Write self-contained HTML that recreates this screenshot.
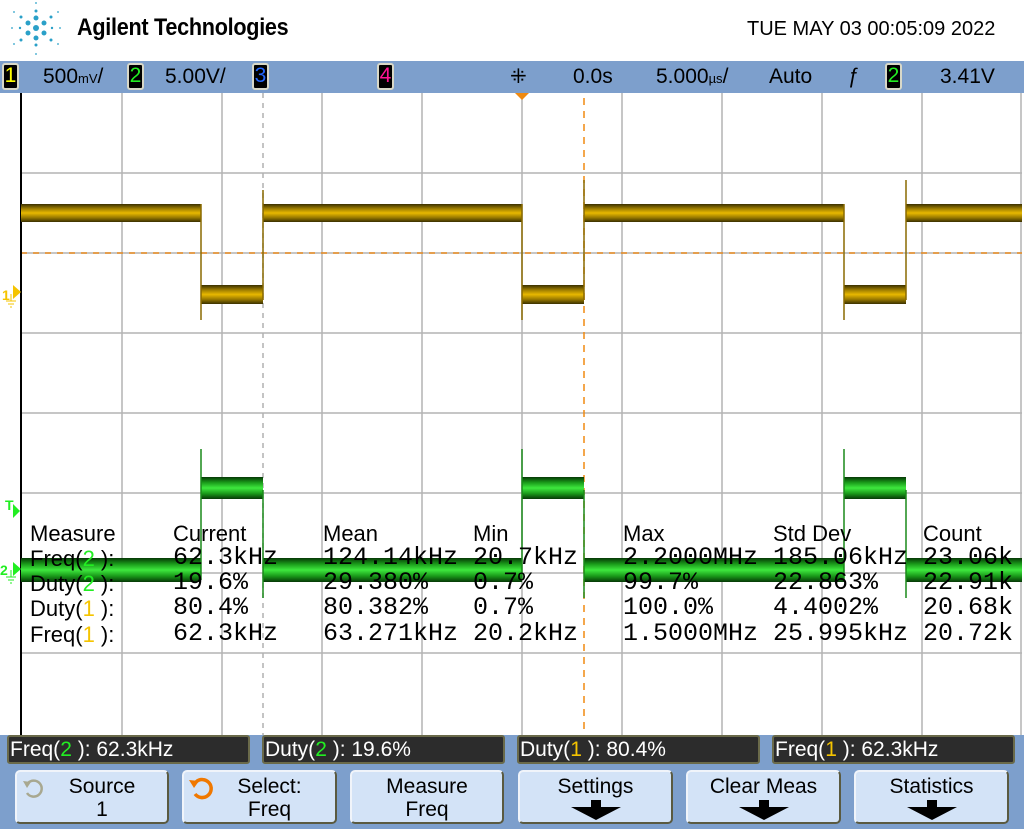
<!DOCTYPE html>
<html><head><meta charset="utf-8"><style>
*{margin:0;padding:0;box-sizing:border-box}
body{width:1024px;height:829px;overflow:hidden;background:#7d9fcc;font-family:"Liberation Sans",sans-serif;position:relative}
.hdr{position:absolute;left:0;top:0;width:1024px;height:61px;background:#fff}
.abs{position:absolute;white-space:nowrap}
.bar{position:absolute;top:61px;left:0;width:1024px;height:32px;background:#7d9fcc;font-size:21px;color:#000}
.cb{position:absolute;top:2px;width:17px;height:27px;background:#000;border:2px solid #d8d8c8;border-radius:3px;font-size:21px;line-height:22px;text-align:center}
.mbox{position:absolute;top:735px;height:29px;background:#2c2c2c;border:2px solid #6a6a4a;border-radius:3px;color:#fff;font-size:21px;line-height:25px;padding-left:1px}
.btn{position:absolute;top:770px;height:54px;background:#d3e3f7;border:2px solid #5a5a40;border-top-color:#f0f4fa;border-left-color:#f0f4fa;border-radius:5px;text-align:center;font-size:21px;line-height:23px;padding-top:3px}
.m{position:absolute;font-family:"Liberation Mono",monospace;font-size:25px;color:#000}
.h{position:absolute;font-size:22px;color:#000}
.g{color:#22ee22}.y{color:#f5c400}
.arr{display:inline-block;margin-top:2px}
</style></head><body>
<div class="hdr">
<svg class="abs" style="left:8px;top:2px" width="60" height="56" viewBox="0 0 60 56">
<g fill="#2aa0c8">
<circle cx="28" cy="26" r="3"/><circle cx="36" cy="21" r="2.5"/><circle cx="20" cy="21" r="2.5"/><circle cx="36" cy="31" r="2.5"/><circle cx="20" cy="31" r="2.5"/><circle cx="28" cy="36" r="2.5"/><circle cx="28" cy="16" r="2.5"/>
<circle cx="43" cy="15" r="1.5"/><circle cx="13" cy="15" r="1.5"/><circle cx="43" cy="38" r="1.5"/><circle cx="13" cy="38" r="1.5"/><circle cx="28" cy="9" r="1.5"/><circle cx="28" cy="43" r="1.5"/>
<circle cx="44" cy="26" r="1.2"/><circle cx="12" cy="26" r="1.2"/><circle cx="52" cy="26" r="0.9"/><circle cx="4" cy="26" r="0.9"/><circle cx="28" cy="1" r="0.9"/><circle cx="28" cy="52" r="0.9"/><circle cx="50" cy="10" r="0.9"/><circle cx="6" cy="10" r="0.9"/><circle cx="50" cy="42" r="0.9"/><circle cx="6" cy="42" r="0.9"/>
</g></svg>
<div class="abs" style="left:77px;top:14px;font-size:24px;font-weight:bold;letter-spacing:-0.3px;transform:scaleX(0.9);transform-origin:left top">Agilent Technologies</div>
<div class="abs" style="left:747px;top:18px;font-size:20px">TUE MAY 03 00:05:09 2022</div>
</div>
<div class="bar">
<div class="cb" style="left:2px;color:#ffff00">1</div>
<div class="abs" style="left:43px;top:4px">500<span style="font-size:13px">mV</span>/</div>
<div class="cb" style="left:127px;color:#22ee22">2</div>
<div class="abs" style="left:165px;top:4px">5.00V/</div>
<div class="cb" style="left:252px;color:#2266ff">3</div>
<div class="cb" style="left:377px;color:#ff1493">4</div>
<div class="abs" style="left:510px;top:3px;font-size:20px">⁜</div>
<div class="abs" style="left:573px;top:4px">0.0s</div>
<div class="abs" style="left:656px;top:4px">5.000<span style="font-size:13px">µs</span>/</div>
<div class="abs" style="left:769px;top:4px">Auto</div>
<div class="abs" style="left:848px;top:4px">ƒ</div>
<div class="cb" style="left:885px;color:#22ee22">2</div>
<div class="abs" style="left:940px;top:4px">3.41V</div>
</div>
<svg class="abs" style="left:0;top:93px" width="1024" height="642" viewBox="0 93 1024 642">
<defs>
<linearGradient id="yg" x1="0" y1="0" x2="0" y2="1"><stop offset="0" stop-color="#3a3000"/><stop offset="0.25" stop-color="#9a7a00"/><stop offset="0.5" stop-color="#e8b800"/><stop offset="0.75" stop-color="#9a7a00"/><stop offset="1" stop-color="#3a3000"/></linearGradient>
<linearGradient id="gg" x1="0" y1="0" x2="0" y2="1"><stop offset="0" stop-color="#063806"/><stop offset="0.25" stop-color="#1a9a1a"/><stop offset="0.5" stop-color="#3ee83e"/><stop offset="0.75" stop-color="#1a9a1a"/><stop offset="1" stop-color="#063806"/></linearGradient>
</defs>
<rect x="0" y="93" width="1024" height="642" fill="#fff"/>
<g stroke="#b4b4b4" stroke-width="1.5">
<path d="M122 93V735M222 93V735M322 93V735M422 93V735M522 93V735M622 93V735M722 93V735M822 93V735M922 93V735M1021 93V735"/>
<path d="M21 173H1022M21 253H1022M21 333H1022M21 413H1022M21 493H1022M21 573H1022M21 653H1022"/>
</g>
<path d="M21 253H1022" stroke="#e88a20" stroke-width="1.5" stroke-dasharray="6 6"/>
<path d="M263 93V735" stroke="#b0b0b0" stroke-width="1.5" stroke-dasharray="5 5"/>
<path d="M584 98V735" stroke="#f08a10" stroke-width="1.5" stroke-dasharray="7 6"/>
<path d="M515 93h14l-7 7z" fill="#f08a10"/>
<line x1="21" y1="93" x2="21" y2="735" stroke="#000" stroke-width="2"/>
<g fill="url(#yg)">
<rect x="21" y="204" width="180" height="18"/><rect x="263" y="204" width="259" height="18"/><rect x="584" y="204" width="260" height="18"/><rect x="906" y="204" width="116" height="18"/>
<rect x="201" y="285" width="62" height="19"/><rect x="522" y="285" width="62" height="19"/><rect x="844" y="285" width="62" height="19"/>
</g>
<g stroke="#8a6a00" stroke-width="1.5"><path d="M201 204V320M263 300V190M522 204V320M584 300V180M844 204V320M906 300V180"/></g>
<g fill="url(#gg)">
<rect x="21" y="558" width="180" height="24"/><rect x="263" y="558" width="259" height="24"/><rect x="584" y="558" width="260" height="24"/><rect x="906" y="558" width="116" height="24"/>
<rect x="201" y="477" width="62" height="22"/><rect x="522" y="477" width="62" height="22"/><rect x="844" y="477" width="62" height="22"/>
</g>
<g stroke="#1a8a1a" stroke-width="1.5"><path d="M201 449V580M263 490V598M522 449V580M584 490V598M844 449V580M906 490V598"/></g>
<text x="2" y="300" font-family="Liberation Sans" font-size="14" font-weight="bold" fill="#f5c400">1</text>
<path d="M13 285l8 7-8 7z" fill="#f5c400"/><path d="M11 294v7M6 301h10M8 304h6M10 307h2" stroke="#f5c400" stroke-width="1"/>
<text x="5" y="510" font-family="Liberation Sans" font-size="14" font-weight="bold" fill="#22ee22">T</text>
<path d="M13 504l7 7-7 7z" fill="#22ee22"/>
<text x="0" y="575" font-family="Liberation Sans" font-size="14" font-weight="bold" fill="#22ee22">2</text>
<path d="M13 562l8 7-8 7z" fill="#22ee22"/><path d="M11 570v7M6 577h10M8 580h6M10 583h2" stroke="#22ee22" stroke-width="1"/>
</svg>
<div class="h" style="left:30px;top:521px">Measure</div>
<div class="h" style="left:173px;top:521px">Current</div>
<div class="h" style="left:323px;top:521px">Mean</div>
<div class="h" style="left:473px;top:521px">Min</div>
<div class="h" style="left:623px;top:521px">Max</div>
<div class="h" style="left:773px;top:521px">Std Dev</div>
<div class="h" style="left:923px;top:521px">Count</div>
<div class="h" style="left:30px;top:546px">Freq(<span class="g">2</span> ):</div>
<div class="h" style="left:30px;top:571px">Duty(<span class="g">2</span> ):</div>
<div class="h" style="left:30px;top:596px">Duty(<span class="y">1</span> ):</div>
<div class="h" style="left:30px;top:622px">Freq(<span class="y">1</span> ):</div>
<div class="m" style="left:173px;top:543px">62.3kHz</div><div class="m" style="left:323px;top:543px">124.14kHz</div><div class="m" style="left:473px;top:543px">20.7kHz</div><div class="m" style="left:623px;top:543px">2.2000MHz</div><div class="m" style="left:773px;top:543px">185.06kHz</div><div class="m" style="left:923px;top:543px">23.06k</div>
<div class="m" style="left:173px;top:568px">19.6%</div><div class="m" style="left:323px;top:568px">29.380%</div><div class="m" style="left:473px;top:568px">0.7%</div><div class="m" style="left:623px;top:568px">99.7%</div><div class="m" style="left:773px;top:568px">22.863%</div><div class="m" style="left:923px;top:568px">22.91k</div>
<div class="m" style="left:173px;top:593px">80.4%</div><div class="m" style="left:323px;top:593px">80.382%</div><div class="m" style="left:473px;top:593px">0.7%</div><div class="m" style="left:623px;top:593px">100.0%</div><div class="m" style="left:773px;top:593px">4.4002%</div><div class="m" style="left:923px;top:593px">20.68k</div>
<div class="m" style="left:173px;top:619px">62.3kHz</div><div class="m" style="left:323px;top:619px">63.271kHz</div><div class="m" style="left:473px;top:619px">20.2kHz</div><div class="m" style="left:623px;top:619px">1.5000MHz</div><div class="m" style="left:773px;top:619px">25.995kHz</div><div class="m" style="left:923px;top:619px">20.72k</div>
<div class="mbox" style="left:7px;width:243px">Freq(<span class="g">2</span> ): 62.3kHz</div>
<div class="mbox" style="left:262px;width:243px">Duty(<span class="g">2</span> ): 19.6%</div>
<div class="mbox" style="left:517px;width:243px">Duty(<span class="y">1</span> ): 80.4%</div>
<div class="mbox" style="left:772px;width:243px">Freq(<span class="y">1</span> ): 62.3kHz</div>
<div class="btn" style="left:15px;width:154px;padding-left:20px">Source<br>1
<svg class="abs" style="left:4px;top:5px" width="26" height="24" viewBox="0 0 26 24"><path d="M7 6a8 8 0 1 1 -1 10" fill="none" stroke="#a8a890" stroke-width="2.5"/><path d="M2 4l8 1-4 6z" fill="#a8a890"/></svg></div>
<div class="btn" style="left:182px;width:155px;padding-left:20px">Select:<br>Freq
<svg class="abs" style="left:3px;top:3px" width="30" height="28" viewBox="0 0 30 28"><path d="M9 7a9 9 0 1 1 -1 12" fill="none" stroke="#f07800" stroke-width="3.5"/><path d="M2 5l10 1-5 7z" fill="#f07800"/></svg></div>
<div class="btn" style="left:350px;width:154px">Measure<br>Freq</div>
<div class="btn" style="left:518px;width:155px">Settings<br><svg class="arr" width="50" height="20" viewBox="0 0 50 20"><path d="M20 0h10v7h20l-25 13-25-13h20z"/></svg></div>
<div class="btn" style="left:686px;width:155px">Clear Meas<br><svg class="arr" width="50" height="20" viewBox="0 0 50 20"><path d="M20 0h10v7h20l-25 13-25-13h20z"/></svg></div>
<div class="btn" style="left:854px;width:155px">Statistics<br><svg class="arr" width="50" height="20" viewBox="0 0 50 20"><path d="M20 0h10v7h20l-25 13-25-13h20z"/></svg></div>
</body></html>
